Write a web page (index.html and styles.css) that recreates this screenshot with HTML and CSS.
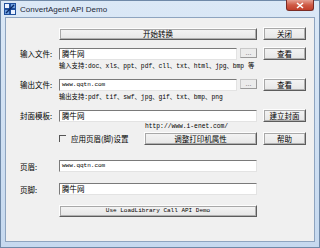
FILE: index.html
```html
<!DOCTYPE html>
<html lang="zh-CN">
<head>
    <meta charset="UTF-8">
    <title>ConvertAgent API Demo</title>
    <link rel="stylesheet" href="styles.css">
</head>
<body>
    <div class="window">
        <div class="titlebar">
            <svg class="app-icon" width="12" height="12" viewBox="0 0 12 12">
                <rect x="0" y="0" width="12" height="12" fill="#1f4f9c"/>
                <rect x="1" y="1" width="4" height="4" fill="#e8f0ff"/>
                <rect x="7" y="1" width="4" height="4" fill="#6fa0e0"/>
                <rect x="1" y="7" width="4" height="4" fill="#6fa0e0"/>
                <rect x="7" y="7" width="4" height="4" fill="#e8f0ff"/>
                <path d="M2 10 L10 2" stroke="#0b2a66" stroke-width="1.5"/>
            </svg>
            <span class="title">ConvertAgent API Demo</span>
            <div class="close-btn">
                <svg width="8" height="7" viewBox="0 0 8 7">
                    <path d="M1 1 L7 6 M7 1 L1 6" stroke="#fff" stroke-width="1.6"/>
                </svg>
            </div>
        </div>

        <div class="client">
            <div class="row row-start">
                <span></span>
                <button class="btn btn-wide">开始转换</button>
                <button class="btn btn-side">关闭</button>
            </div>

            <div class="row row-field">
                <label class="label">输入文件:</label>
                <div class="field-pair">
                    <div class="input">腾牛网</div>
                    <button class="btn btn-dots">...</button>
                </div>
                <button class="btn btn-side">查看</button>
            </div>
            <div class="hint">输入支持:doc、xls、ppt、pdf、cll、txt、html、jpg、bmp 等</div>

            <div class="row row-field">
                <label class="label">输出文件:</label>
                <div class="field-pair">
                    <div class="input mono">www.qqtn.com</div>
                    <button class="btn btn-dots">...</button>
                </div>
                <button class="btn btn-side">查看</button>
            </div>
            <div class="hint">输出支持:pdf、tif、swf、jpg、gif、txt、bmp、png</div>

            <div class="row row-field">
                <label class="label">封面模板:</label>
                <div class="input">腾牛网</div>
                <button class="btn btn-side">建立封面</button>
            </div>
            <div class="url">http://www.i-enet.com/</div>

            <div class="row row-options">
                <span></span>
                <div class="options">
                    <label class="check"><span class="box"></span>应用页眉(脚)设置</label>
                    <button class="btn btn-printer">调整打印机属性</button>
                </div>
                <button class="btn btn-side">帮助</button>
            </div>

            <div class="row row-header">
                <label class="label">页眉:</label>
                <div class="input mono">www.qqtn.com</div>
            </div>

            <div class="row row-footer">
                <label class="label">页脚:</label>
                <div class="input">腾牛网</div>
            </div>

            <div class="row row-demo">
                <span></span>
                <button class="btn btn-wide mono">Use LoadLibrary Call API Demo</button>
            </div>
        </div>
    </div>
</body>
</html>
```

FILE: styles.css
```css
* {
    margin: 0;
    padding: 0;
    box-sizing: border-box;
}

body {
    width: 320px;
    height: 248px;
    overflow: hidden;
    background: #b9cde5;
    font-family: "Noto Sans CJK SC", "Liberation Sans", sans-serif;
    font-size: 8px;
    color: #000;
}

.window {
    width: 320px;
    height: 248px;
    background: linear-gradient(180deg, #dbe8f6 0%, #c6d9ef 100%);
    border: 1px solid #6f89a8;
    display: flex;
    flex-direction: column;
    padding: 0 4px 5px 4px;
}

.titlebar {
    height: 16px;
    display: flex;
    align-items: center;
    position: relative;
}

.app-icon {
    margin-left: -1px;
    margin-right: 4px;
}

.title {
    font-family: "Liberation Sans", sans-serif;
    font-size: 8px;
    color: #1e2a3a;
}

.close-btn {
    position: absolute;
    right: 1px;
    top: -1px;
    width: 28px;
    height: 11px;
    border: 1px solid #7a2b24;
    border-top: none;
    border-radius: 0 0 3px 3px;
    background: linear-gradient(180deg, #e6a092 0%, #cf5a45 50%, #c13f2b 100%);
    display: flex;
    align-items: center;
    justify-content: center;
}

.client {
    flex: 1;
    background: #f0f0f0;
    border: 1px solid #8ea4bf;
    padding-top: 8px;
}

.row {
    display: grid;
    grid-template-columns: 47px 198px 43px;
    column-gap: 6px;
    align-items: center;
}

.label {
    padding-left: 14px;
    font-size: 7.5px;
    white-space: nowrap;
}

.btn {
    font-family: "Noto Sans CJK SC", "Liberation Sans", sans-serif;
    font-size: 7.5px;
    color: #000;
    background: linear-gradient(180deg, #f4f4f4 0%, #e6e6e6 100%);
    border: 1px solid;
    border-color: #fdfdfd #5c5c5c #5c5c5c #fdfdfd;
    box-shadow: 1px 1px 0 #a8a8a8 inset, -1px -1px 0 #b0b0b0 inset;
    height: 13px;
    line-height: 1;
    display: flex;
    align-items: center;
    justify-content: center;
}

.btn-side {
    height: 13px;
}

.row-start .btn-wide {
    height: 12px;
}

.row-start {
    margin-top: 1px;
}

.field-pair {
    display: flex;
    gap: 3px;
}

.field-pair .input {
    flex: 1;
}

.btn-dots {
    width: 17px;
    height: 10px;
    color: #666;
    font-family: "Liberation Sans", sans-serif;
    font-size: 7px;
    box-shadow: none;
    border-color: #c8c8c8 #9a9a9a #9a9a9a #c8c8c8;
    background: #ececec;
}

.input {
    height: 12px;
    background: #fff;
    border: 1px solid;
    border-color: #7a7a7a #e3e3e3 #e3e3e3 #7a7a7a;
    padding-left: 2px;
    font-size: 7.5px;
    line-height: 10px;
    white-space: nowrap;
    overflow: hidden;
}

.mono {
    font-family: "Liberation Mono", monospace;
    font-size: 6px;
}

.row-field {
    margin-top: 7px;
}

.hint {
    margin-left: 53px;
    margin-top: 2px;
    font-family: "Liberation Mono", "Noto Sans CJK SC", monospace;
    font-size: 6.3px;
    white-space: nowrap;
    height: 9px;
    line-height: 9px;
}

.url {
    margin-left: 139px;
    margin-top: 1px;
    font-family: "Liberation Mono", monospace;
    font-size: 6.3px;
    height: 8px;
    line-height: 8px;
}

.row-options {
    margin-top: 1px;
}

.options {
    display: flex;
    align-items: center;
    justify-content: space-between;
}

.check {
    display: flex;
    align-items: center;
    gap: 5px;
    font-size: 7.5px;
}

.box {
    width: 7px;
    height: 7px;
    border-left: 1px solid #555;
    border-top: 1px solid #555;
}

.btn-printer {
    width: 113px;
}

.row-header {
    margin-top: 15px;
}

.row-footer {
    margin-top: 11px;
}

.row-demo {
    margin-top: 10px;
}

.row-demo .btn-wide {
    height: 12px;
    font-size: 6px;
}
```
